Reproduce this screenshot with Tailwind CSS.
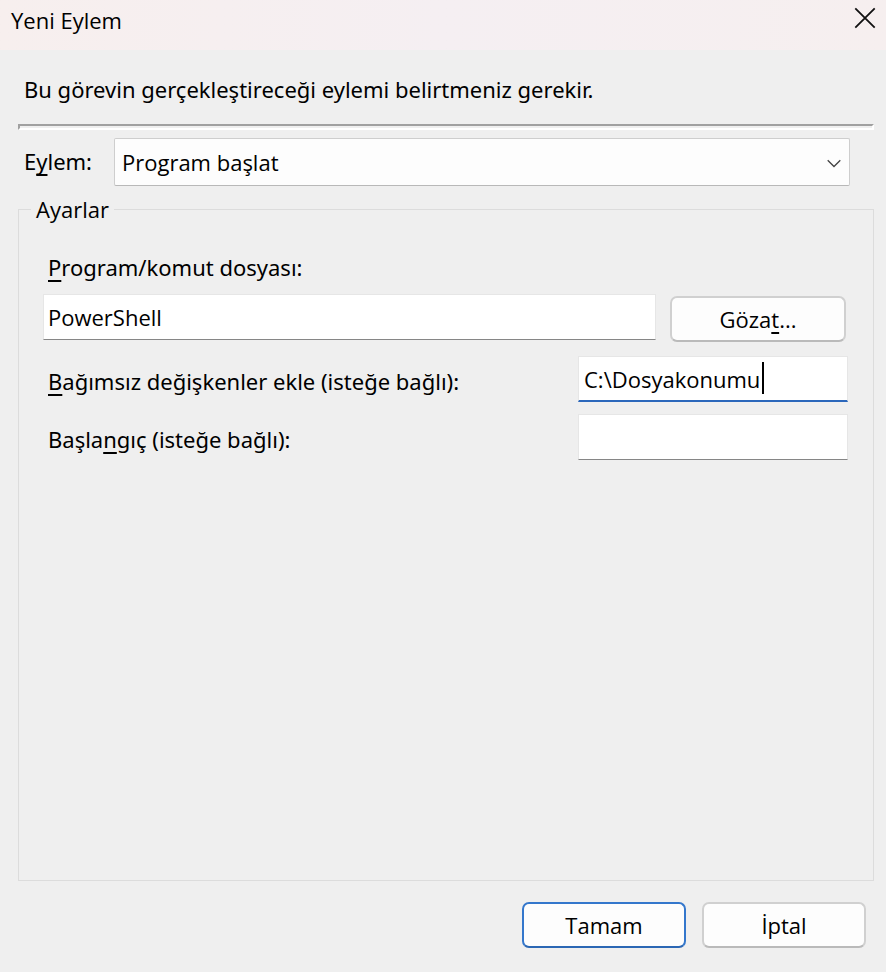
<!DOCTYPE html>
<html lang="tr">
  <head>
    <meta charset="UTF-8" />
    <meta name="viewport" content="width=device-width, initial-scale=1.0" />
    <title>Yeni Eylem</title>
    <script src="https://cdn.jsdelivr.net/npm/@tailwindcss/browser@4"></script>
  </head>
  <body
    class="flex min-h-screen flex-col bg-[#efefef] font-['Open_Sans','Noto_Sans',sans-serif] text-[22px] leading-8 text-black"
  >
    <!-- Title bar -->
    <header
      class="flex h-[50px] items-start justify-between bg-linear-to-r from-[#f7efee] via-[#f5eff2] to-[#f6efef] pl-[11px] pr-[10px]"
    >
      <h1 class="mt-1">Yeni Eylem</h1>
      <button type="button" aria-label="Kapat" class="mt-[7px]">
        <svg class="size-[22px]" viewBox="0 0 22 22" fill="none" stroke="#111" stroke-width="1.8">
          <path d="M1.3 1.3l19.4 19.4M20.7 1.3L1.3 20.7" />
        </svg>
      </button>
    </header>

    <form class="flex flex-1 flex-col pb-6">
      <p class="mt-[23px] px-6 font-['Noto_Sans',sans-serif]">
        Bu görevin gerçekleştireceği eylemi belirtmeniz gerekir.
      </p>
      <hr
        class="ml-[18px] mr-3 mt-[19px] h-[6px] border-2 border-b-white border-l-[#a0a0a0] border-r-white border-t-[#a0a0a0]"
      />

      <div class="mt-2 flex items-center pl-6 pr-9">
        <label for="action" class="w-[90px] pb-[2px] font-['Noto_Sans',sans-serif]"
          >E<span class="underline decoration-2 underline-offset-4 [text-decoration-skip-ink:none]">y</span>lem:</label
        >
        <div class="relative flex-1">
          <select
            id="action"
            class="h-12 w-full appearance-none rounded-[2px] border border-[#cecece] border-b-[#b8b8b8] bg-[#fdfdfd] px-[7px]"
          >
            <option>Program başlat</option>
          </select>
          <svg
            class="pointer-events-none absolute right-[9px] top-[21px] h-[9px] w-[14px]"
            viewBox="0 0 14 9"
            fill="none"
            stroke="#444"
            stroke-width="1.3"
          >
            <path d="M.7 1.2L7 7.5l6.3-6.3" />
          </svg>
        </div>
      </div>

      <!-- Settings -->
      <fieldset
        class="ml-[18px] mr-3 mt-2 flex-1 border border-[#dcdcdc] pl-6 pr-[25px]"
      >
        <legend class="-ml-3 px-[5px] leading-[30px]">Ayarlar</legend>

        <label for="program" class="mt-[27px] block pl-[5px] font-['Noto_Sans',sans-serif]"
          ><span class="underline decoration-2 underline-offset-4">P</span>rogram/komut dosyası:</label
        >
        <div class="mt-[11px] flex items-start">
          <input
            id="program"
            type="text"
            value="PowerShell"
            class="h-[46px] min-w-0 flex-1 border border-[#e6e6e6] border-b-[#868686] bg-white px-1"
          />
          <button
            type="button"
            class="ml-[14px] mr-[2px] mt-[2px] h-[46px] w-[176px] rounded-[7px] border-2 border-[#d0d0d0] border-b-[#bababa] bg-[#fdfdfd]"
          >
            Göza<span class="underline decoration-2 underline-offset-4">t</span>...
          </button>
        </div>

        <div class="mt-[14px] flex items-center justify-between">
          <label for="arguments" class="mt-1 pl-[5px] font-['Noto_Sans',sans-serif]"
            ><span class="underline decoration-2 underline-offset-4">B</span>ağımsız değişkenler ekle (isteğe
            bağlı):</label
          >
          <div class="relative w-[270px]">
            <input
              id="arguments"
              type="text"
              value="C:\Dosyakonumu"
              class="h-[46px] w-full border border-b-2 border-[#e6e6e6] border-b-[#2b67bb] bg-white px-[5px] caret-transparent outline-none"
            />
            <span class="absolute left-[184px] top-[6px] h-8 w-[2px] bg-black"></span>
          </div>
        </div>

        <div class="mt-3 flex items-center justify-between">
          <label for="start-in" class="mt-1 pl-[5px] font-['Noto_Sans',sans-serif]"
            >Başla<span class="underline decoration-2 underline-offset-4">n</span>gıç (isteğe bağlı):</label
          >
          <input
            id="start-in"
            type="text"
            class="h-[46px] w-[270px] border border-[#e6e6e6] border-b-[#868686] bg-white px-[5px]"
          />
        </div>
      </fieldset>

      <div class="mt-[21px] flex justify-end gap-4 pr-5">
        <button
          type="submit"
          class="h-[46px] w-[164px] rounded-[7px] border-2 border-[#3477cc] border-b-[#2b67b4] bg-[#fdfdfd]"
        >
          Tamam
        </button>
        <button
          type="button"
          class="h-[46px] w-[164px] rounded-[7px] border-2 border-[#d0d0d0] border-b-[#bababa] bg-[#fdfdfd]"
        >
          İptal
        </button>
      </div>
    </form>
  </body>
</html>
